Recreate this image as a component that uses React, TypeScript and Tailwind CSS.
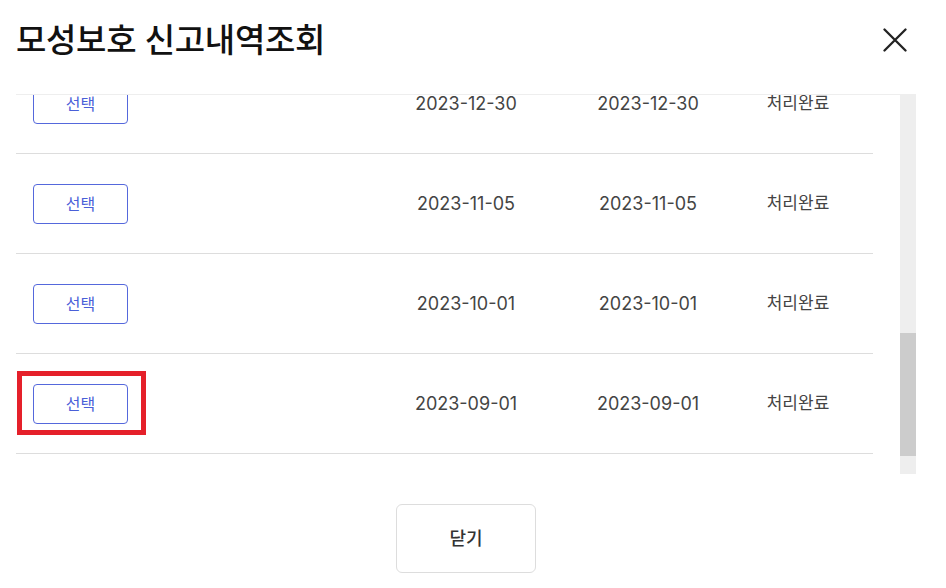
import React from "react";

const rows = [
  { a: "2023-12-30", b: "2023-12-30", s: "처리완료" },
  { a: "2023-11-05", b: "2023-11-05", s: "처리완료" },
  { a: "2023-10-01", b: "2023-10-01", s: "처리완료" },
  { a: "2023-09-01", b: "2023-09-01", s: "처리완료" },
];

export default function App() {
  return (
    <div
      className="relative w-[946px] h-[588px] bg-white overflow-hidden"
      style={{ fontFamily: 'Inter, "Noto Sans CJK KR", sans-serif' }}
    >
      <div className="flex h-[94px] items-center justify-between pb-[14px] pl-4 pr-[39px]">
        <h1 className="text-[33px] font-medium text-[#111] tracking-[-0.3px] leading-none">
          모성보호 신고내역조회
        </h1>
        <svg width="24" height="24" viewBox="0 0 24 24" className="text-[#222]">
          <path d="M1.5 1.5 L22.5 22.5 M22.5 1.5 L1.5 22.5" stroke="currentColor" strokeWidth="2.3" strokeLinecap="round" />
        </svg>
      </div>

      <div className="ml-4 flex">
        <div className="w-[884px] h-[380px] overflow-hidden border-t border-[#eeeeee]">
          <div className="w-[857px] -mt-[41px]">
            {rows.map((r, i) => (
              <div key={i} className="flex h-[100px] items-center border-b border-[#dddddd]">
                <div className="w-[360px] pl-[17px]">
                  <button className="flex h-[40px] w-[95px] items-center justify-center rounded-[4px] border border-[#5568dc] text-[16px] text-[#4a5fd8]">
                    선택
                  </button>
                </div>
                <div className="w-[180px] text-center text-[18px] font-normal text-[#444]">{r.a}</div>
                <div className="w-[184px] text-center text-[18px] font-normal text-[#444]">{r.b}</div>
                <div className="w-[116px] text-center text-[17px] text-[#444]">{r.s}</div>
              </div>
            ))}
          </div>
        </div>
        <div className="w-4 h-[380px] bg-[#eeeeee]">
          <div className="mt-[239px] h-[123px] bg-[#cccccc]" />
        </div>
      </div>

      <div className="ml-4 mt-[30px] flex w-[900px] justify-center">
        <button className="flex h-[69px] w-[140px] items-center justify-center rounded-[6px] border border-[#dddddd] bg-white text-[18px] font-medium text-[#333]">
          닫기
        </button>
      </div>

      <div className="absolute left-[17px] top-[371px] h-[64px] w-[129px] border-[5px] border-[#e5202a]" />
    </div>
  );
}
